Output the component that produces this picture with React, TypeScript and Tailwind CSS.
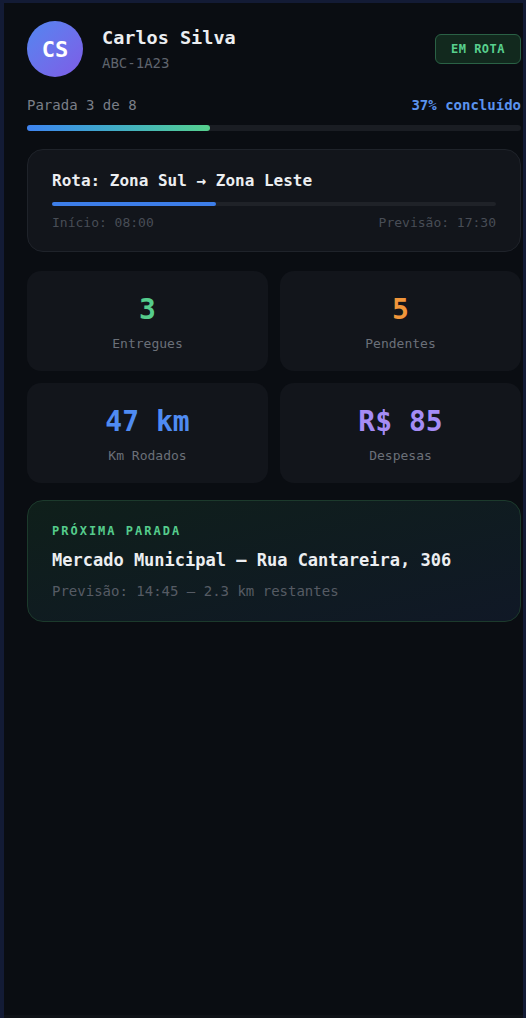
import type { ReactNode } from 'react';

// Painel do motorista: cabeçalho, progresso da rota, métricas do dia e a
// próxima parada. Tudo em fonte mono, tema escuro.

const MONO = "font-['DejaVu_Sans_Mono','Liberation_Mono',monospace]";

type Stat = { value: string; label: string; color: string };

const STATS: Stat[] = [
  { value: '3', label: 'Entregues', color: 'text-[#55cc8c]' },
  { value: '5', label: 'Pendentes', color: 'text-[#f0953a]' },
  { value: '47 km', label: 'Km Rodados', color: 'text-[#4f8bf2]' },
  { value: 'R$ 85', label: 'Despesas', color: 'text-[#a58cf5]' },
];

function StatCard({ stat }: { stat: Stat }) {
  return (
    <div className="flex h-[100px] flex-col items-center rounded-[14px] bg-[#12151b] pt-[25px]">
      <span className={`text-[28px] leading-7 font-bold ${stat.color}`}>{stat.value}</span>
      <span className="mt-[11px] text-[13px] leading-[18px] text-[#6b7079]">{stat.label}</span>
    </div>
  );
}

function Card({ children, className = '' }: { children: ReactNode; className?: string }) {
  return <div className={`rounded-2xl border ${className}`}>{children}</div>;
}

export default function App() {
  const progress = 37;

  return (
    <div className={`h-[1018px] overflow-hidden bg-[#131b35] pt-[3px] pr-[3px] pl-[4px] ${MONO}`}>
      <div className="h-[1015px] border-b-[3px] border-b-[#0f1217] bg-[#0a0d12] pt-[18px] pl-[23px]">
        <div className="w-[494px]">
          {/* cabeçalho */}
          <div className="flex h-14 items-center">
            <div className="flex h-14 w-14 items-center justify-center rounded-full bg-linear-to-br from-[#4f86f0] to-[#7d5be6] text-[22px] font-bold text-white">
              CS
            </div>
            <div className="ml-[19px] flex flex-1 flex-col">
              <span className="text-[18.5px] leading-6 font-semibold text-[#eceef1]">Carlos Silva</span>
              <span className="mt-[3px] text-[14px] leading-5 font-medium text-[#5f646d]">ABC-1A23</span>
            </div>
            <span className="flex h-[30px] w-[86px] items-center justify-center rounded-md border border-[#2a6145] bg-[#12291e] text-[12px] font-bold tracking-[0.5px] text-[#58d08e]">
              EM ROTA
            </span>
          </div>

          {/* progresso */}
          <div className="mt-[18px] flex items-center justify-between text-[14px] leading-5">
            <span className="text-[#7a7f88]">Parada 3 de 8</span>
            <span className="font-semibold text-[#5b93ee]">{progress}% concluído</span>
          </div>
          <div className="mt-2.5 h-1.5 rounded-full bg-[#1a1d23]">
            <div
              className="h-full rounded-full bg-linear-to-r from-[#3f83f0] to-[#56d08c]"
              style={{ width: `${progress}%` }}
            />
          </div>

          {/* rota */}
          <Card className="mt-[18px] border-[#1f232a] bg-[#12151b] px-6 py-[19px]">
            <div className="text-[16px] leading-6 font-semibold text-[#eceef1]">Rota: Zona Sul → Zona Leste</div>
            <div className="mt-[9px] h-1 rounded-full bg-[#1f2228]">
              <div className="h-full rounded-full bg-[#3d7ee9]" style={{ width: `${progress}%` }} />
            </div>
            <div className="mt-2 flex justify-between text-[13px] leading-[18px] text-[#484d56]">
              <span>Início: 08:00</span>
              <span>Previsão: 17:30</span>
            </div>
          </Card>

          {/* métricas */}
          <div className="mt-[19px] grid grid-cols-2 gap-3">
            {STATS.map((s) => (
              <StatCard key={s.label} stat={s} />
            ))}
          </div>

          {/* próxima parada */}
          <Card className="mt-[17px] border-[#1c3a2c] bg-linear-to-br from-[#0f1f1a] to-[#101826] px-6 pt-[22px] pb-5">
            <div className="text-[12px] leading-4 font-semibold tracking-[2px] text-[#55cc8c]">PRÓXIMA PARADA</div>
            <div className="mt-[9px] text-[17px] leading-6 font-semibold text-[#eceef1]">
              Mercado Municipal — Rua Cantareira, 306
            </div>
            <div className="mt-[9px] text-[14px] leading-5 text-[#565b64]">Previsão: 14:45 — 2.3 km restantes</div>
          </Card>
        </div>
      </div>
    </div>
  );
}
